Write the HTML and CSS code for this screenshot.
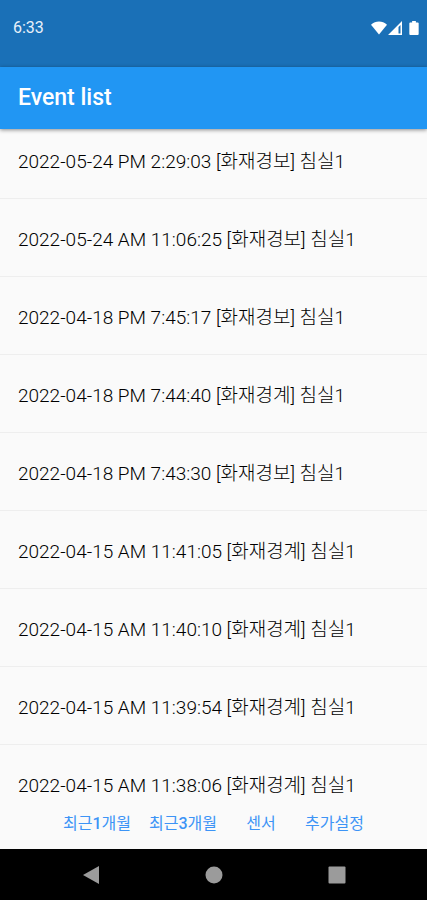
FILE: index.html
```html
<!DOCTYPE html>
<html lang="ko">
<head>
<meta charset="utf-8">
<meta name="viewport" content="width=device-width, initial-scale=1">
<title>Event list</title>
<link rel="stylesheet" href="styles.css">
</head>
<body>
<div class="status-bar">
  <span>6:33</span>
  <div class="status-icons">
    <svg width="16" height="14" viewBox="0 0 17 14" aria-hidden="true"><path fill="currentColor" d="M0 3.5C5-1 12-1 17 3.5L8.500 14Z"/></svg>
    <svg width="14" height="14" viewBox="0 0 14 14" aria-hidden="true"><path fill="currentColor" fill-rule="evenodd" d="M14 0V14H0ZM12.500 4L10.500 6V12.500H12.500Z"/></svg>
    <svg class="battery" width="10" height="14" viewBox="0 0 10 15" aria-hidden="true"><path fill="currentColor" d="M3 0H7V1.500H9Q10 1.500 10 2.500V14Q10 15 9 15H1Q0 15 0 14V2.500Q0 1.500 1 1.500H3Z"/></svg>
  </div>
</div>
<header class="app-bar"><h1>Event list</h1></header>
<main class="events">
  <ul>
    <li>2022-05-24 PM 2:29:03 [화재경보] 침실1</li>
    <li>2022-05-24 AM 11:06:25 [화재경보] 침실1</li>
    <li>2022-04-18 PM 7:45:17 [화재경보] 침실1</li>
    <li>2022-04-18 PM 7:44:40 [화재경계] 침실1</li>
    <li>2022-04-18 PM 7:43:30 [화재경보] 침실1</li>
    <li>2022-04-15 AM 11:41:05 [화재경계] 침실1</li>
    <li>2022-04-15 AM 11:40:10 [화재경계] 침실1</li>
    <li>2022-04-15 AM 11:39:54 [화재경계] 침실1</li>
    <li>2022-04-15 AM 11:38:06 [화재경계] 침실1</li>
  </ul>
</main>
<div class="filters">
  <button type="button">최근<b>1</b>개월</button>
  <button type="button">최근<b>3</b>개월</button>
  <button type="button">센서</button>
  <button type="button">추가설정</button>
</div>
<nav class="system-nav">
  <button type="button" aria-label="Back"><svg width="18" height="20" viewBox="0 0 18 20"><path fill="currentColor" d="M17 1V19L1 10Z"/></svg></button>
  <button type="button" aria-label="Home"><svg width="18" height="18" viewBox="0 0 18 18"><circle fill="currentColor" cx="9" cy="9" r="8.500"/></svg></button>
  <button type="button" aria-label="Recent apps"><svg width="18" height="18" viewBox="0 0 18 18"><rect fill="currentColor" x=".5" y=".5" width="17" height="17" rx="1"/></svg></button>
</nav>
</body>
</html>
```
FILE: styles.css
```css
* {
  box-sizing: border-box;
}

body {
  margin: 0;
  height: 100vh;
  display: flex;
  flex-direction: column;
  overflow: hidden;
  background: #fafafa;
  color: #000;
  font-family: Roboto, "Noto Sans CJK KR", sans-serif;
}

button {
  border: 0;
  padding: 0;
  background: none;
  font: inherit;
  color: inherit;
}

svg {
  display: block;
}

.status-bar {
  flex: none;
  display: flex;
  align-items: center;
  justify-content: space-between;
  padding: 17px 8px 28px 13px;
  background: #1a70b7;
  color: #e8f1fa;
  font-size: 16px;
  line-height: 22px;
}

.status-icons {
  display: flex;
  align-items: center;
  gap: 1px;
  color: #fff;
}

.battery {
  margin-left: 6px;
}

.app-bar {
  flex: none;
  position: relative;
  padding: 16px 18px;
  background: #2196f3;
  color: #fff;
  box-shadow: 0 1px 4px rgba(0, 0, 0, 0.45);
}

.app-bar h1 {
  margin: 0;
  font-size: 23px;
  font-weight: 500;
  line-height: 30px;
}

.events {
  flex: 1;
  min-height: 0;
  overflow: hidden;
}

.events ul {
  margin: 0;
  padding: 0;
  list-style: none;
}

.events li {
  padding: 31px 18px 26px;
  border-bottom: 1px solid #eee;
  font-size: 19px;
  font-weight: 300;
  line-height: 20px;
  white-space: nowrap;
}

.events li:first-child {
  padding-top: 23px;
}

.filters {
  flex: none;
  display: flex;
  justify-content: center;
  height: 50px;
}

.filters button {
  min-width: 70px;
  padding: 0 9px;
  color: #3d94f6;
  font-size: 16px;
  line-height: 20px;
}

.filters b {
  font-weight: 500;
}

.system-nav {
  flex: none;
  display: flex;
  justify-content: center;
  gap: 34px;
  height: 51px;
  background: #000;
  color: #9b9b9b;
}

.system-nav button {
  width: 89px;
  display: flex;
  align-items: center;
  justify-content: center;
}
```
